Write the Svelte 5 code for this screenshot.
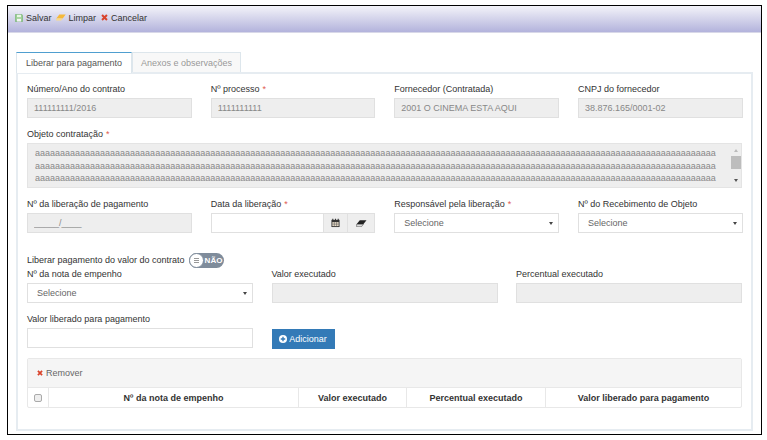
<script>
	const line = 'a'.repeat(136);

	const topFields = [
		{ label: 'Número/Ano do contrato', value: '111111111/2016' },
		{ label: 'Nº processo', value: '1111111111', required: true },
		{ label: 'Fornecedor (Contratada)', value: '2001 O CINEMA ESTA AQUI' },
		{ label: 'CNPJ do fornecedor', value: '38.876.165/0001-02' }
	];

	const columns = ['Nº da nota de empenho', 'Valor executado', 'Percentual executado', 'Valor liberado para pagamento'];
</script>

<div class="frame">
	<div class="toolbar">
		<button class="tool">
			<svg width="8" height="8" viewBox="0 0 10 10">
				<path d="M0.5 0.5h8l1 1v8h-9z" fill="#9ccf94" stroke="#6fae6f" stroke-width="0.8" />
				<rect x="2.5" y="1" width="5" height="3" fill="#e8f4e4" />
				<rect x="2.5" y="6" width="5" height="3.4" fill="#f4f4f4" />
			</svg>
			Salvar
		</button>
		<button class="tool">
			<svg width="10" height="7" viewBox="0 0 15 10">
				<path d="M5 0.5h9.5l-4.5 6h-9.5z" fill="#f5b93a" />
				<path d="M0.5 6.5h9.5l-2.2 3h-7.6z" fill="#f7d98a" />
			</svg>
			Limpar
		</button>
		<button class="tool cancel">
			<svg width="7" height="7" viewBox="0 0 8 8">
				<path d="M1.2 1.2l5.6 5.6M6.8 1.2l-5.6 5.6" stroke="#d9432b" stroke-width="2.3" />
			</svg>
			Cancelar
		</button>
	</div>

	<div class="content">
		<div class="tabs">
			<div class="tab active">Liberar para pagamento</div>
			<div class="tab">Anexos e observações</div>
		</div>

		<div class="panel">
			<div class="row four">
				{#each topFields as f}
					<div class="field">
						<label>{f.label}{#if f.required}<span class="req">*</span>{/if}</label>
						<input disabled value={f.value} />
					</div>
				{/each}
			</div>

			<div class="field objeto">
				<label>Objeto contratação<span class="req">*</span></label>
				<div class="textarea">
					<div class="lines">
						<div>{line}</div>
						<div>{line}</div>
						<div>{line}</div>
					</div>
					<div class="scrollbar">
						<span class="up"></span>
						<span class="thumb"></span>
						<span class="down"></span>
					</div>
				</div>
			</div>

			<div class="row four third">
				<div class="field">
					<label>Nº da liberação de pagamento</label>
					<input disabled value="_____/____" />
				</div>
				<div class="field">
					<label>Data da liberação<span class="req">*</span></label>
					<div class="group">
						<input />
						<button class="addon cal" aria-label="Calendário">
							<svg width="9" height="10" viewBox="0 0 10 10">
								<path d="M0.5 1.5h9v8h-9z" fill="#333" />
								<path d="M2 0.3v2M5 0.3v2M8 0.3v2" stroke="#333" stroke-width="1.2" />
								<path d="M1.5 4h7v4.5h-7z" fill="#e8dcc8" />
								<path d="M3.7 4v4.5M6.2 4v4.5M1.5 6.2h7" stroke="#555" stroke-width="0.6" />
							</svg>
						</button>
						<button class="addon" aria-label="Limpar">
							<svg width="11" height="7" viewBox="0 0 12 8">
								<path d="M4 0.3h7.7l-3.6 4.6h-7.7z" fill="#222" />
								<path d="M0.4 4.9h7.7l-2.2 2.8h-5.5z" fill="#ddd" stroke="#222" stroke-width="0.5" />
							</svg>
						</button>
					</div>
				</div>
				<div class="field">
					<label>Responsável pela liberação<span class="req">*</span></label>
					<div class="select">Selecione</div>
				</div>
				<div class="field">
					<label>Nº do Recebimento de Objeto</label>
					<div class="select">Selecione</div>
				</div>
			</div>

			<div class="switch-line">
				<span>Liberar pagamento do valor do contrato</span>
				<div class="switch">
					<span class="knob"><i></i></span>
					<b>NÃO</b>
				</div>
			</div>

			<div class="row three">
				<div class="field">
					<label>Nº da nota de empenho</label>
					<div class="select">Selecione</div>
				</div>
				<div class="field">
					<label>Valor executado</label>
					<input disabled />
				</div>
				<div class="field">
					<label>Percentual executado</label>
					<input disabled />
				</div>
			</div>

			<div class="row three fifth">
				<div class="field">
					<label>Valor liberado para pagamento</label>
					<input />
				</div>
				<div class="add-cell">
					<button class="add">
						<svg width="8" height="8" viewBox="0 0 10 10">
							<circle cx="5" cy="5" r="5" fill="#fff" />
							<path d="M5 2.2v5.6M2.2 5h5.6" stroke="#337ab7" stroke-width="1.7" />
						</svg>
						Adicionar
					</button>
				</div>
			</div>

			<div class="grid">
				<div class="grid-bar">
					<svg width="6" height="6" viewBox="0 0 8 8">
						<path d="M1.2 1.2l5.6 5.6M6.8 1.2l-5.6 5.6" stroke="#d9432b" stroke-width="2.3" />
					</svg>
					Remover
				</div>
				<div class="grid-head">
					<div class="check"><span></span></div>
					{#each columns as c}
						<div class="col">{c}</div>
					{/each}
				</div>
			</div>
		</div>
	</div>
</div>

<style>
	:global(body) {
		background: #fff;
	}

	.frame {
		box-sizing: border-box;
		width: 755px;
		height: 430px;
		margin: 5px 0 0 7px;
		border: 1.5px solid #000;
		font-family: "Liberation Sans", Arial, sans-serif;
		font-size: 9px;
		color: #333;
		background: #fff;
	}

	.toolbar {
		display: flex;
		align-items: center;
		gap: 4px;
		height: 27px;
		padding: 0 0 3px 7px;
		box-sizing: border-box;
		background: linear-gradient(#f3f3f9, #b3b3dc);
		border-bottom: 1px solid #d8d8e8;
	}

	.tool {
		display: flex;
		align-items: center;
		gap: 3px;
		padding: 0;
		border: none;
		background: none;
		font: inherit;
		color: #333;
	}

	.tool.cancel {
		margin-left: 1px;
	}

	.content {
		padding: 19px 8px 0 8px;
	}

	.tabs {
		display: flex;
		height: 20px;
	}

	.tab {
		box-sizing: border-box;
		display: flex;
		align-items: center;
		justify-content: center;
		width: 109px;
		height: 20px;
		border: 1px solid #dde6ec;
		border-bottom: none;
		background: #f8f8f8;
		color: #999;
	}

	.tab.active {
		width: 116px;
		height: 21px;
		border: 1px solid #dde6ec;
		border-top: 1px solid #4f9fd0;
		border-bottom: none;
		background: #fff;
		color: #555;
		position: relative;
		z-index: 1;
	}

	.panel {
		box-sizing: border-box;
		width: 737px;
		height: 359px;
		padding: 9px 9px 0 9px;
		border: 2px solid #e6ecf1;
	}

	.row {
		display: grid;
	}

	.four {
		grid-template-columns: repeat(4, 164.75px);
		column-gap: 18.9px;
	}

	.three {
		grid-template-columns: repeat(3, 226px);
		column-gap: 18.5px;
	}

	.field label {
		display: block;
		height: 12px;
		line-height: 12px;
		margin-bottom: 3px;
	}

	.req {
		margin-left: 3px;
		color: #e05a4f;
	}

	input {
		display: block;
		box-sizing: border-box;
		width: 100%;
		height: 20px;
		padding: 0 6px;
		border: 1px solid #e0e0e0;
		background: #fff;
		font: inherit;
		outline: none;
	}

	input:disabled {
		background: #eee;
		color: #888;
		opacity: 1;
	}

	.objeto {
		margin-top: 10px;
	}

	.textarea {
		display: flex;
		box-sizing: border-box;
		height: 45px;
		padding: 3px 0 0 7px;
		border: 1px solid #e4e4e4;
		background: #eee;
		color: #888;
		overflow: hidden;
	}

	.lines {
		flex: 1;
		line-height: 12.7px;
		overflow: hidden;
		white-space: nowrap;
	}

	.scrollbar {
		display: flex;
		flex-direction: column;
		align-items: center;
		justify-content: space-between;
		width: 11px;
		margin-top: -3px;
		padding: 5px 0;
		box-sizing: border-box;
	}

	.up,
	.down {
		width: 0;
		height: 0;
		border-left: 2.5px solid transparent;
		border-right: 2.5px solid transparent;
	}

	.up {
		border-bottom: 3px solid #bbb;
	}

	.down {
		border-top: 3px solid #555;
	}

	.thumb {
		width: 10px;
		height: 13px;
		margin-bottom: 7px;
		background: #bdbdbd;
	}

	.third {
		margin-top: 10px;
	}

	.group {
		display: flex;
		height: 20px;
	}

	.group input {
		flex: 1;
		min-width: 0;
	}

	.addon {
		display: flex;
		align-items: center;
		justify-content: center;
		box-sizing: border-box;
		width: 27px;
		height: 20px;
		padding: 0;
		border: 1px solid #e0e0e0;
		border-left: none;
		background: #eee;
	}

	.addon.cal {
		width: 24px;
	}

	.select {
		position: relative;
		box-sizing: border-box;
		height: 20px;
		line-height: 18px;
		padding-left: 9px;
		border: 1px solid #e0e0e0;
		background: #fff;
		color: #666;
	}

	.select::after {
		content: "";
		position: absolute;
		right: 5px;
		top: 8px;
		border-left: 2px solid transparent;
		border-right: 2px solid transparent;
		border-top: 3px solid #444;
	}

	.switch-line {
		display: flex;
		align-items: center;
		gap: 4px;
		height: 16px;
		margin-top: 19px;
	}

	.switch {
		display: flex;
		align-items: center;
		box-sizing: border-box;
		width: 35px;
		height: 15px;
		border-radius: 8px;
		background: #7f8c9b;
	}

	.knob {
		display: flex;
		align-items: center;
		justify-content: center;
		box-sizing: border-box;
		width: 15px;
		height: 15px;
		border: 1px solid #7f8c9b;
		border-radius: 50%;
		background: #fff;
	}

	.knob i {
		width: 5px;
		height: 5px;
		border-top: 1px solid #999;
		border-bottom: 1px solid #999;
		background: linear-gradient(#999, #999) center / 100% 1px no-repeat;
		box-sizing: border-box;
	}

	.switch b {
		margin-left: 1px;
		font-size: 8px;
		color: #fff;
	}

	.fifth {
		margin-top: 10px;
	}

	.add-cell {
		padding-top: 16px;
	}

	.add {
		display: flex;
		align-items: center;
		justify-content: center;
		gap: 2px;
		box-sizing: border-box;
		width: 63px;
		height: 20px;
		padding: 0;
		border: none;
		background: #337ab7;
		color: #fff;
		font: inherit;
	}

	.grid {
		box-sizing: border-box;
		height: 50px;
		margin-top: 9px;
		border: 1px solid #e8e8e8;
		border-radius: 2px;
	}

	.grid-bar {
		display: flex;
		align-items: center;
		gap: 3px;
		box-sizing: border-box;
		height: 29px;
		padding-left: 9px;
		background: #f5f5f5;
		border-bottom: 1px solid #e8e8e8;
		color: #666;
	}

	.grid-head {
		display: grid;
		grid-template-columns: 21px 250px 108px 139px 1fr;
		height: 19px;
		font-weight: bold;
	}

	.col,
	.check {
		display: flex;
		align-items: center;
		justify-content: center;
		border-right: 1px solid #e8e8e8;
	}

	.col:last-child {
		border-right: none;
	}

	.check {
		justify-content: flex-start;
		padding-left: 6px;
	}

	.check span {
		box-sizing: border-box;
		width: 8px;
		height: 8px;
		border: 1px solid #aaa;
		border-radius: 2px;
		background: #eee;
	}
</style>
